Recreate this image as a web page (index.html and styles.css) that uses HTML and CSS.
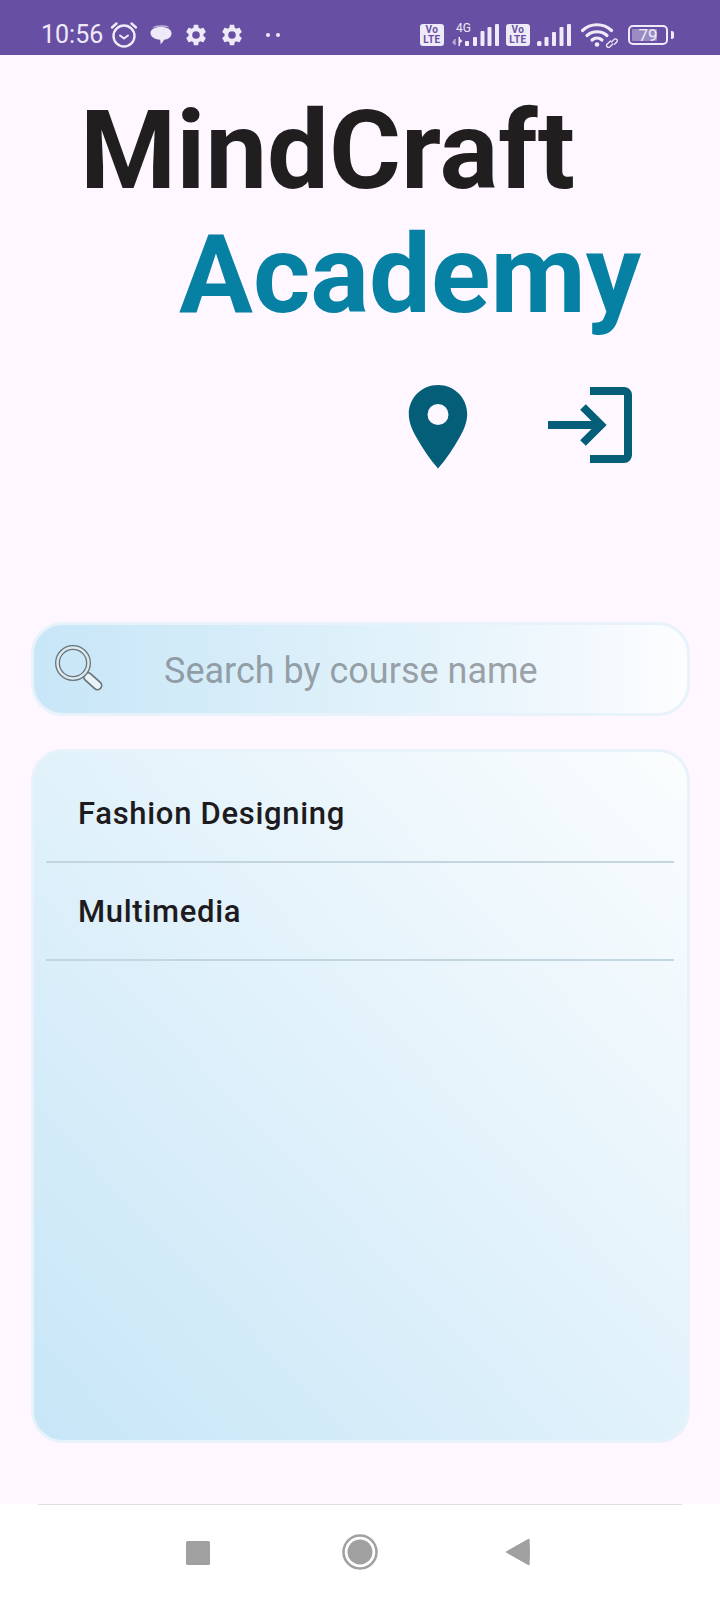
FILE: index.html
```html
<!DOCTYPE html>
<html lang="en">
<head>
    <meta charset="UTF-8">
    <meta name="viewport" content="width=device-width, initial-scale=1.0">
    <title>MindCraft Academy</title>
    <link rel="stylesheet" href="styles.css">
</head>
<body>
    <div class="status-bar">
        <div class="status-left">
            <span class="clock">10:56</span>
            <svg class="st-alarm" width="28" height="28" viewBox="0 0 28 28" fill="none" stroke="#efeaf7" stroke-linecap="round">
                <circle cx="14" cy="15" r="10.500" stroke-width="2.400"/>
                <path d="M10 14.500l4 3 4-3" stroke-width="2" stroke-linejoin="round"/>
                <path d="M2 6.500L6.500 2.500M26 6.500L21.500 2.500" stroke-width="2.400"/>
            </svg>
            <svg class="st-bubble" width="22" height="20" viewBox="0 0 22 20" fill="#efeaf7">
                <path d="M2 3C4 .8 8 .2 12 .2c3.500 0 6 .8 7.500 2.300-3-1-12-1.300-17.500.5z" opacity=".7"/>
                <path d="M.5 8C.5 4.500 4.500 2 11 2s10.500 2.500 10.500 6.500c0 3.600-3.500 6-7.500 6.300-.7 1.700-2 3.500-3.500 4.500.2-1.600.1-3-.4-4.600C4.500 14.300.5 11.800.5 8z"/>
            </svg>
            <svg class="st-gear" width="24" height="24" viewBox="0 0 24 24"><path fill="#efeaf7" d="M19.400 13c.05-.33.1-.66.1-1s-.05-.67-.1-1l2.200-1.700c.2-.15.25-.43.120-.65l-2.100-3.600c-.12-.22-.4-.3-.63-.22l-2.600 1.040c-.54-.41-1.120-.76-1.760-1.020L14.200 2.100c-.04-.25-.25-.42-.5-.42h-3.400c-.25 0-.46.17-.5.420L9.400 4.850c-.64.26-1.220.61-1.760 1.020L5.040 4.830c-.23-.08-.51 0-.63.22l-2.100 3.600c-.13.22-.08.5.120.65L4.630 11c-.05.33-.1.660-.1 1s.05.67.1 1l-2.200 1.700c-.2.150-.25.430-.12.650l2.100 3.600c.12.220.4.300.63.220l2.600-1.040c.54.410 1.120.760 1.760 1.020l.4 2.750c.04.250.25.420.5.420h3.400c.25 0 .46-.17.5-.42l.4-2.750c.64-.26 1.220-.61 1.760-1.020l2.600 1.040c.23.08.51 0 .63-.22l2.100-3.600c.13-.22.08-.5-.12-.65zM12 15.800a3.800 3.800 0 1 1 0-7.600 3.800 3.800 0 0 1 0 7.600z"/></svg>
            <svg class="st-gear" width="24" height="24" viewBox="0 0 24 24"><path fill="#efeaf7" d="M19.400 13c.05-.33.1-.66.1-1s-.05-.67-.1-1l2.200-1.700c.2-.15.25-.43.120-.65l-2.100-3.600c-.12-.22-.4-.3-.63-.22l-2.600 1.040c-.54-.41-1.120-.76-1.760-1.020L14.200 2.100c-.04-.25-.25-.42-.5-.42h-3.400c-.25 0-.46.17-.5.420L9.400 4.850c-.64.26-1.220.61-1.760 1.020L5.040 4.830c-.23-.08-.51 0-.63.22l-2.100 3.600c-.13.22-.08.5.120.65L4.630 11c-.05.33-.1.660-.1 1s.05.67.1 1l-2.200 1.700c-.2.150-.25.430-.12.650l2.100 3.600c.12.220.4.300.63.220l2.600-1.040c.54.410 1.120.760 1.760 1.020l.4 2.750c.04.250.25.420.5.420h3.400c.25 0 .46-.17.5-.42l.4-2.750c.64-.26 1.220-.61 1.760-1.020l2.600 1.040c.23.08.51 0 .63-.22l2.100-3.600c.13-.22.08-.5-.12-.65zM12 15.800a3.800 3.800 0 1 1 0-7.600 3.800 3.800 0 0 1 0 7.600z"/></svg>
            <span class="st-dots"><i></i><i></i></span>
        </div>
        <div class="status-right">
            <span class="volte">Vo<br>LTE</span>
            <svg class="st-signal-4g" width="48" height="26" viewBox="0 0 48 26" fill="#efeaf7">
                <text x="4" y="9.500" font-family="Roboto" font-size="12">4G</text>
                <path d="M3 17v6M0.500 20.500L3 23l0-6z" stroke="#efeaf7" stroke-width="1" opacity=".55"/>
                <path d="M7 16l3.500 3L7 22z"/>
                <rect x="6.500" y="15" width="1.500" height="9"/>
                <rect x="13" y="19" width="4" height="5" rx="1"/>
                <rect x="21" y="15" width="4" height="9" rx="1"/>
                <rect x="28.500" y="9" width="4" height="15" rx="1"/>
                <rect x="35.500" y="5" width="4" height="19" rx="1"/>
                <rect x="43" y="2" width="4" height="22" rx="1"/>
            </svg>
            <span class="volte">Vo<br>LTE</span>
            <svg class="st-signal" width="34" height="26" viewBox="0 0 34 26" fill="#efeaf7">
                <rect x="0" y="19" width="4.500" height="5" rx="1.500"/>
                <rect x="7.500" y="15" width="4" height="9" rx="1"/>
                <rect x="15" y="10" width="4" height="14" rx="1"/>
                <rect x="22.500" y="5" width="4" height="19" rx="1"/>
                <rect x="30" y="2" width="4" height="22" rx="1"/>
            </svg>
            <svg class="st-wifi" width="37" height="26" viewBox="0 0 37 26" fill="none" stroke="#efeaf7" stroke-linecap="round">
                <path d="M1.500 8.500C9.500 .8 22.500 .8 30.500 8.500" stroke-width="3.200"/>
                <path d="M6 13.500c5.500-5 14.500-5 20 0" stroke-width="3.200"/>
                <path d="M11 18c3-2.700 7-2.700 10 0" stroke-width="3.200"/>
                <circle cx="16" cy="22.500" r="2.300" fill="#efeaf7" stroke="none"/>
                <path d="M30.500 20l3-3a2 2 0 0 1 2.500 2.800l-2.500 2.500" stroke-width="1.300"/>
                <path d="M29.500 19l-3.500 3.200a2 2 0 0 0 2.800 2.800l3-3" stroke-width="1.300"/>
            </svg>
            <div class="battery">
                <div class="battery-fill"></div>
                <span class="battery-num">79</span>
            </div>
        </div>
    </div>

    <div class="page">
        <div class="brand">
            <h1 class="brand-top">MindCraft</h1>
            <h1 class="brand-bottom">Academy</h1>
        </div>
        <div class="actions">
            <svg class="pin" width="60" height="84" viewBox="0 0 60 84">
                <path fill="#045e78" fill-rule="evenodd" d="M30 0C13.500 0 .8 13 .8 29c0 8 3.200 16 8 24 5.500 10 12.500 20.500 21.200 30.500C38.700 73.500 45.700 63 51.200 53c4.800-8 8-16 8-24C59.200 13 46.500 0 30 0zm0 19a10.500 10.500 0 1 1 0 21 10.500 10.500 0 0 1 0-21z"/>
            </svg>
            <svg class="login" width="84" height="76" viewBox="0 0 84 76" fill="none" stroke="#045e78" stroke-width="8">
                <path d="M42 4h34a4 4 0 0 1 4 4v60a4 4 0 0 1-4 4H42"/>
                <path d="M0 38h54"/>
                <path d="M35 20l18 18-18 18"/>
            </svg>
        </div>

        <div class="search">
            <svg class="search-icon" width="50" height="50" viewBox="0 0 50 50">
                <path d="M30 30l5 4" stroke="#6a7479" stroke-width="4"/>
                <path d="M34 33l9.500 8.500" stroke="#6a7479" stroke-width="10" stroke-linecap="round"/>
                <path d="M34 33l9.500 8.500" stroke="#e8f3fa" stroke-width="6.500" stroke-linecap="round"/>
                <circle cx="19" cy="19" r="15.500" fill="none" stroke="#6a7479" stroke-width="5"/>
                <circle cx="19" cy="19" r="15.500" fill="none" stroke="#dbe9f1" stroke-width="2.400"/>
            </svg>
            <span class="search-text">Search by course name</span>
        </div>

        <div class="course-list">
            <div class="course-row">Fashion Designing</div>
            <div class="course-row">Multimedia</div>
        </div>
    </div>

    <div class="nav-bar">
        <svg class="nav-square" width="24" height="24" viewBox="0 0 24 24"><rect width="24" height="24" rx="1.500" fill="#a0a0a0"/></svg>
        <svg class="nav-home" width="36" height="36" viewBox="0 0 36 36"><circle cx="18" cy="18" r="16.500" fill="none" stroke="#a0a0a0" stroke-width="2.500"/><circle cx="18" cy="18" r="12.500" fill="#a0a0a0"/></svg>
        <svg class="nav-back" width="25" height="28" viewBox="0 0 25 28"><path d="M24 1L1 14l23 13c.5-8 .5-18 0-26z" fill="#a0a0a0" stroke="#a0a0a0" stroke-linejoin="round"/></svg>
    </div>
</body>
</html>
```

FILE: styles.css
```css
body {
    font-family: "Roboto", sans-serif;
    margin: 0;
    padding: 0;
    width: 720px;
    height: 1600px;
    background: #fef7ff;
    display: flex;
    flex-direction: column;
    overflow: hidden;
}

.status-bar {
    height: 55px;
    flex-shrink: 0;
    background: #6750a4;
    color: #efeaf7;
    display: flex;
    justify-content: space-between;
    align-items: center;
    padding: 14px 52px 0 41px;
    box-sizing: border-box;
}

.status-left {
    display: flex;
    align-items: center;
}

.clock {
    font-size: 25px;
    width: 69px;
}

.st-bubble {
    margin-left: 12px;
}

.st-gear {
    margin-left: 12px;
}

.st-dots {
    display: flex;
    gap: 6px;
    margin-left: 22px;
}

.st-dots i {
    width: 4px;
    height: 4px;
    border-radius: 50%;
    background: #efeaf7;
}

.status-right {
    display: flex;
    align-items: center;
}

.volte {
    width: 24px;
    height: 22px;
    background: #efeaf7;
    color: #6750a4;
    border-radius: 3px;
    font-size: 10px;
    font-weight: 700;
    line-height: 10px;
    letter-spacing: .4px;
    text-align: center;
    padding-top: 1px;
    margin-top: 1px;
    box-sizing: border-box;
}

.st-signal-4g {
    margin-left: 8px;
    margin-right: 6px;
}

.st-signal {
    margin-left: 7px;
}

.st-wifi {
    margin-left: 10px;
}

.battery {
    position: relative;
    width: 40px;
    height: 20px;
    border: 2px solid #efeaf7;
    border-radius: 5px;
    box-sizing: border-box;
    margin-left: 10px;
    text-align: center;
}

.battery::after {
    content: "";
    position: absolute;
    right: -8px;
    top: 4px;
    width: 3px;
    height: 8px;
    background: #efeaf7;
    border-radius: 0 2px 2px 0;
}

.battery-fill {
    position: absolute;
    left: 2px;
    top: 2px;
    bottom: 2px;
    width: 25px;
    background: #9a8bc5;
    border-radius: 1px;
}

.battery-num {
    position: relative;
    font-size: 17px;
    line-height: 16px;
    display: block;
}

.page {
    flex: 1;
    padding: 0 30px 0 31px;
    display: flex;
    flex-direction: column;
}

.brand-top,
.brand-bottom {
    margin: 0;
    font-size: 110px;
    font-weight: 700;
    line-height: 124px;
}

.brand {
    padding-top: 34px;
}

.brand-top {
    color: #211e1f;
    margin-left: 49px;
}

.brand-bottom {
    color: #0680a3;
    margin-left: 148px;
}

.actions {
    display: flex;
    justify-content: flex-end;
    align-items: flex-start;
    gap: 80px;
    padding-right: 58px;
    margin-top: 48px;
    height: 84px;
}

.actions .login {
    margin-top: 2px;
}

.search {
    margin-top: 153px;
    height: 94px;
    box-sizing: border-box;
    border: 3px solid #e8f2fa;
    border-radius: 32px;
    background: linear-gradient(90deg, #c7e6f7, #e6f4fb 65%, #fdfdff);
    display: flex;
    align-items: center;
    padding-left: 20px;
}

.search-text {
    font-size: 36px;
    color: rgba(100, 105, 110, .62);
    margin-left: 60px;
    padding-top: 4px;
}

.course-list {
    margin-top: 33px;
    height: 694px;
    box-sizing: border-box;
    border: 3px solid #e8f2fa;
    border-radius: 32px;
    background: linear-gradient(to top right, #c7e6f7, #fbfdfe);
    padding: 13px 13px 0 12px;
}

.course-row {
    height: 98px;
    box-sizing: border-box;
    border-bottom: 2px solid #c3d5df;
    font-size: 31px;
    font-weight: 500;
    letter-spacing: .7px;
    color: #1d1b20;
    display: flex;
    align-items: center;
    padding-left: 32px;
}

.nav-bar {
    height: 96px;
    flex-shrink: 0;
    background: #fff;
    position: relative;
    display: flex;
    align-items: center;
    padding-left: 186px;
    box-sizing: border-box;
}

.nav-bar::before {
    content: "";
    position: absolute;
    top: 0;
    left: 38px;
    right: 38px;
    height: 1px;
    background: #e0dde4;
}

.nav-square {
    margin-top: 2px;
}

.nav-home {
    margin-left: 132px;
}

.nav-back {
    margin-left: 127px;
}
```
